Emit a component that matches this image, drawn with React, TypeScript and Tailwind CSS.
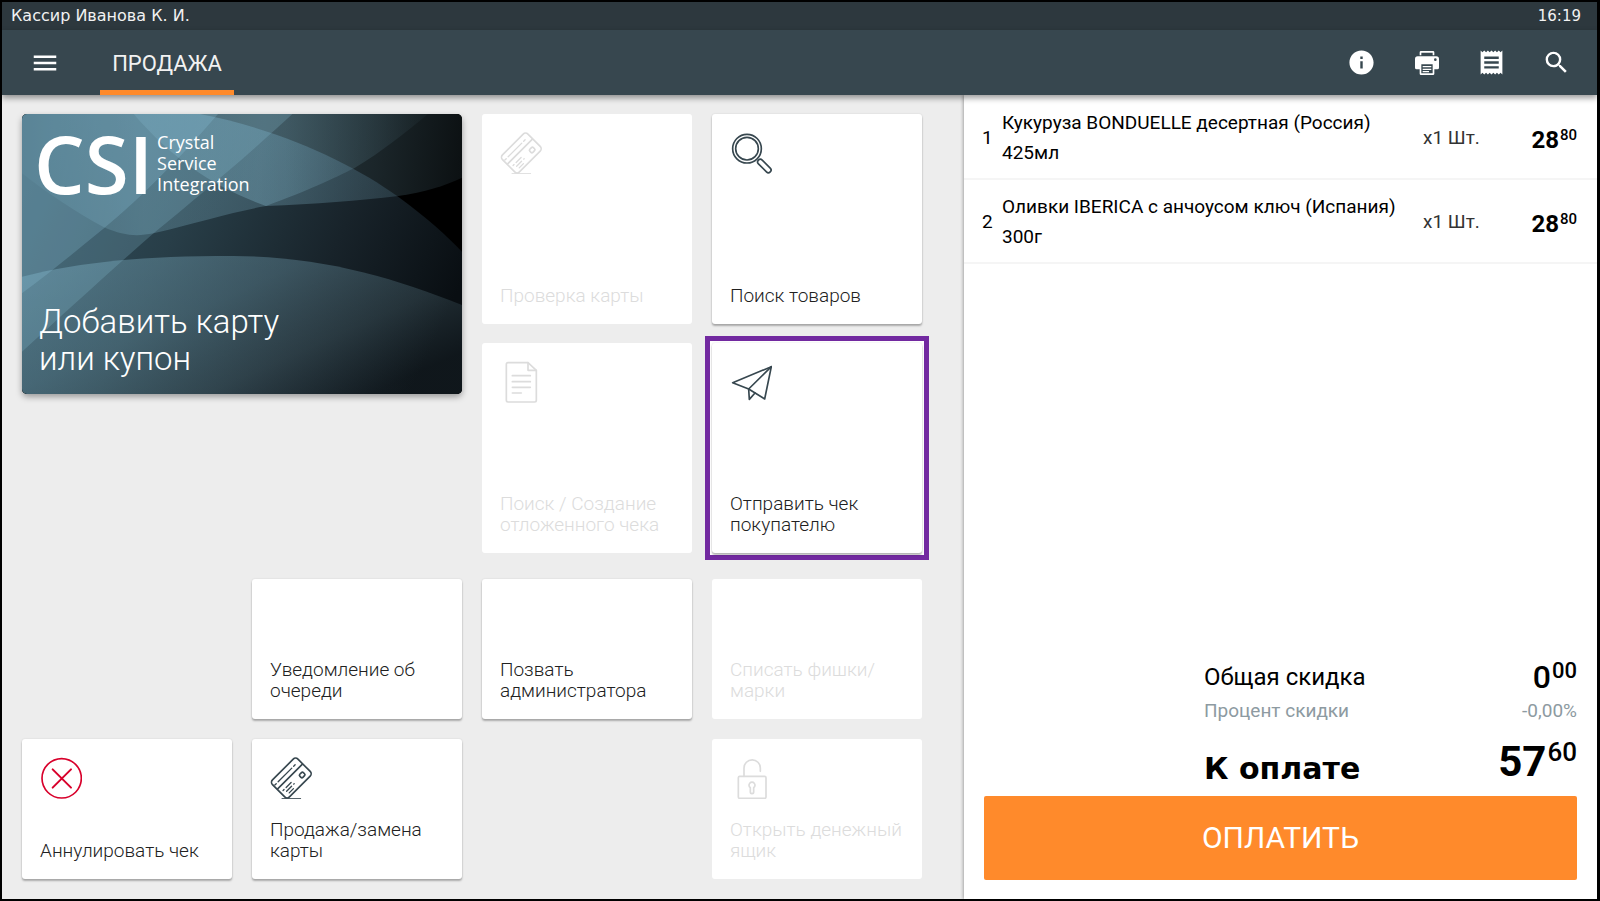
import React from "react";
import { MdInfo, MdMenu, MdReceipt, MdSearch } from "react-icons/md";

const svgProps = {
  viewBox: "0 0 126 126",
  className: "size-[42px] shrink-0",
  fill: "none",
  stroke: "currentColor",
  strokeWidth: 5,
  strokeLinecap: "round" as const,
  strokeLinejoin: "round" as const,
  "aria-hidden": true,
};

function CardIcon() {
  return (
    <svg {...svgProps}>
      <g transform="translate(64 63) rotate(-45)">
        <rect x="-54" y="-36" width="108" height="72" rx="10" />
        <path d="M-52 -6H52" />
        <path d="M-50 -20H-44M-36 -20H22M30 -20H36" strokeWidth="4" />
        <rect x="22" y="10" width="15" height="13" rx="4" />
        <path d="M-44 9H-40M-31 9H-10M-38 18H-17M-8 18H-6M-36 27H-18" strokeWidth="4" />
      </g>
      <path d="M36 125H92" strokeWidth="3" />
    </svg>
  );
}

function LoupeIcon() {
  return (
    <svg {...svgProps}>
      <circle cx="51" cy="50" r="43" />
      <circle cx="51" cy="50" r="34" />
      <rect x="-25" y="-8" width="50" height="16" rx="8" transform="translate(103 102) rotate(45)" />
    </svg>
  );
}

function DocumentIcon() {
  return (
    <svg {...svgProps}>
      <path d="M84 5H24a5 5 0 0 0-5 5V118a5 5 0 0 0 5 5H104a5 5 0 0 0 5-5V28Z" />
      <path d="M84 5V28H109M37 44H91M37 62H91M37 79H91M37 96H64" />
    </svg>
  );
}

function PlaneIcon() {
  return (
    <svg {...svgProps}>
      <path d="M8 65L124 17L104 114L56 84Z" />
      <path d="M124 17L56 84L58 115L75 96" />
    </svg>
  );
}

function CancelIcon() {
  return (
    <svg {...svgProps} className="size-[42px] shrink-0 text-[#d8002b]">
      <circle cx="65" cy="64" r="59" />
      <path d="M38 37L93 92M93 37L38 92" strokeWidth="6" />
    </svg>
  );
}

function LockIcon() {
  return (
    <svg {...svgProps}>
      <rect x="25" y="58" width="83" height="66" rx="4" />
      <path d="M42 58V33a24 24 0 0 1 49 0V43" />
      <path d="M61 92a9 9 0 1 1 10 0V105a5 5 0 0 1-10 0Z" />
    </svg>
  );
}

function PrinterIcon() {
  return (
    <svg viewBox="0 0 72 72" className="size-6" fill="currentColor" aria-hidden="true">
      <path d="M14 13V4a4 4 0 0 1 4-4H54a4 4 0 0 1 4 4V13H53V5H19V13Z" />
      <path
        fillRule="evenodd"
        d="M8 16H64a8 8 0 0 1 8 8V50a5 5 0 0 1-5 5H58V68a4 4 0 0 1-4 4H18a4 4 0 0 1-4-4V55H5a5 5 0 0 1-5-5V24a8 8 0 0 1 8-8ZM61 22a4 4 0 1 0 0 8a4 4 0 0 0 0-8ZM19 40V67H53V40Z"
      />
      <path d="M23 45H49V49H23ZM23 53H49V57H23ZM23 60H42V64H23Z" />
    </svg>
  );
}

type TileProps = {
  label: string;
  icon?: React.ReactNode;
  disabled?: boolean;
  place: string;
};

function Tile({ label, icon, disabled, place }: TileProps) {
  const tone = disabled
    ? "text-[#dcdcdc]"
    : "text-[#37474f] shadow-[0_2px_2px_rgba(0,0,0,0.28),0_0_2px_rgba(0,0,0,0.12)]";
  return (
    <button
      type="button"
      disabled={disabled}
      className={`flex flex-col justify-between rounded-[3px] bg-white p-[18px] text-left text-[19px]/[21px] font-light ${tone} ${place}`}
    >
      {icon ?? <span />}
      <span className={disabled ? "" : "text-[#212121]"}>{label}</span>
    </button>
  );
}

function CardArt() {
  return (
    <svg
      viewBox="62 42 1331 840"
      preserveAspectRatio="none"
      className="absolute inset-0 size-full rounded-[5px]"
      aria-hidden="true"
    >
      <defs>
        <linearGradient id="base" x1="0" y1="0.3" x2="1" y2="0.6">
          <stop offset="0" stopColor="#32505e" />
          <stop offset="0.35" stopColor="#283e48" />
          <stop offset="0.7" stopColor="#18232a" />
          <stop offset="1" stopColor="#090e12" />
        </linearGradient>
        <linearGradient id="wave" x1="0" y1="0" x2="1" y2="0.7">
          <stop offset="0" stopColor="#8cc4da" stopOpacity="0.36" />
          <stop offset="0.45" stopColor="#7aaabd" stopOpacity="0.33" />
          <stop offset="0.75" stopColor="#6d929f" stopOpacity="0.24" />
          <stop offset="1" stopColor="#5a7a88" stopOpacity="0.08" />
        </linearGradient>
        <linearGradient id="sheen" x1="0" y1="0" x2="1" y2="0">
          <stop offset="0" stopColor="#8cc4da" stopOpacity="0.06" />
          <stop offset="0.3" stopColor="#8cc4da" stopOpacity="0.26" />
          <stop offset="0.65" stopColor="#8cc4da" stopOpacity="0.24" />
          <stop offset="1" stopColor="#8cc4da" stopOpacity="0.03" />
        </linearGradient>
        <linearGradient id="crest" gradientUnits="userSpaceOnUse" x1="400" y1="0" x2="1393" y2="100">
          <stop offset="0" stopColor="#8cc4da" stopOpacity="0.2" />
          <stop offset="0.4" stopColor="#8cc4da" stopOpacity="0.3" />
          <stop offset="0.75" stopColor="#8cc4da" stopOpacity="0.19" />
          <stop offset="1" stopColor="#8cc4da" stopOpacity="0.09" />
        </linearGradient>
      </defs>
      <rect x="62" y="42" width="1331" height="840" fill="#000" />
      <path
        d="M62 42H600C850 90 1060 190 1200 290C1290 355 1350 410 1393 455V882H62Z"
        fill="url(#base)"
      />
      <path
        d="M62 530C250 484 430 468 700 468C960 468 1180 530 1393 615V882H62Z"
        fill="url(#wave)"
      />
      <path
        d="M62 220C140 280 230 340 310 382C370 408 410 410 460 400C600 366 700 336 800 318C930 270 1000 238 1068 204C1150 155 1220 100 1290 42H62Z"
        fill="url(#sheen)"
      />
      <path
        d="M400 42C520 180 640 260 800 318C950 312 1080 302 1200 288C1280 276 1340 258 1393 233V42Z"
        fill="url(#crest)"
      />
      <path d="M62 42H880C730 180 600 285 460 400C330 512 190 640 62 755Z" fill="#8cc4da" fillOpacity="0.23" />
      <path d="M62 42H655C540 175 430 285 310 385C230 450 150 515 62 580Z" fill="#8cc4da" fillOpacity="0.25" />
    </svg>
  );
}

function LoyaltyCard() {
  return (
    <button
      type="button"
      className="relative col-span-2 row-span-2 flex h-[280px] flex-col justify-between self-start rounded-[5px] bg-black pt-4 pb-[17px] text-left text-white shadow-[0_3px_6px_rgba(0,0,0,0.35)]"
    >
      <CardArt />
      <span className="relative flex items-center gap-1 pl-3 font-['Open_Sans',sans-serif]">
        <span className="text-[80px]/[66px] font-semibold">CSI</span>
        <span className="text-lg/[21px]">
          Crystal
          <br />
          Service
          <br />
          Integration
        </span>
      </span>
      <span className="relative pl-[17px] text-[33px]/[37px] font-light">
        Добавить карту
        <br />
        или купон
      </span>
    </button>
  );
}

const items = [
  { id: 1, name: "Кукуруза BONDUELLE десертная (Россия) 425мл", qty: "x1 Шт.", rub: "28", kop: "80" },
  { id: 2, name: "Оливки IBERICA с анчоусом ключ (Испания) 300г", qty: "x1 Шт.", rub: "28", kop: "80" },
];

const actions = [
  { label: "Информация", icon: <MdInfo className="size-[29px]" /> },
  { label: "Печать", icon: <PrinterIcon /> },
  { label: "Чеки", icon: <MdReceipt className="size-[29px]" /> },
  { label: "Поиск", icon: <MdSearch className="size-[29px]" /> },
];

export default function App() {
  return (
    <div className="flex min-h-screen flex-col border-2 border-r-[3px] border-black bg-[#ededed] font-[Roboto,sans-serif] text-black">
      <div className="flex h-7 items-center justify-between bg-[#2d383e] pr-4 pl-[9px] font-['DejaVu_Sans',sans-serif] text-[#f2f2f2]">
        <span className="text-base/5">Кассир Иванова К. И.</span>
        <time className="text-[15px]/5">16:19</time>
      </div>

      <header className="relative z-10 flex h-[65px] items-stretch justify-between bg-[#37474f] pr-2 text-white shadow-[0_3px_6px_rgba(0,0,0,0.4)]">
        <div className="flex">
          <button type="button" aria-label="Меню" className="flex w-[86px] items-center justify-center">
            <MdMenu className="size-[30px]" />
          </button>
          <nav className="ml-3 flex">
            <a
              href="#sale"
              className="flex w-[134px] items-center justify-center border-b-[5px] border-[#ff8a2b] pt-[7px] text-[22px]/[26px] text-[#f2f2f2]"
            >
              ПРОДАЖА
            </a>
          </nav>
        </div>
        <div className="flex">
          {actions.map((a) => (
            <button
              key={a.label}
              type="button"
              aria-label={a.label}
              className="flex w-[65px] items-center justify-center"
            >
              {a.icon}
            </button>
          ))}
        </div>
      </header>

      <div className="grid flex-1 grid-cols-[962fr_633fr]">
        <main className="flex flex-col justify-between gap-6 pt-[19px] pr-[42px] pb-5 pl-5">
          <div className="grid auto-rows-[210px] grid-cols-4 gap-x-5 gap-y-[19px]">
            <LoyaltyCard />
            <Tile label="Проверка карты" icon={<CardIcon />} disabled place="col-start-3" />
            <Tile label="Поиск товаров" icon={<LoupeIcon />} place="col-start-4" />
            <Tile
              label="Поиск / Создание отложенного чека"
              icon={<DocumentIcon />}
              disabled
              place="col-start-3"
            />
            <div className="relative col-start-4 grid">
              <div className="absolute -inset-[7px] border-[5px] border-[#7229a0] bg-white" />
              <Tile label="Отправить чек покупателю" icon={<PlaneIcon />} place="relative" />
            </div>
          </div>
          <div className="grid auto-rows-[140px] grid-cols-4 gap-5">
            <Tile label="Уведомление об очереди" place="col-start-2" />
            <Tile label="Позвать администратора" place="col-start-3" />
            <Tile label="Списать фишки/марки" disabled place="col-start-4" />
            <Tile label="Аннулировать чек" icon={<CancelIcon />} place="col-start-1" />
            <Tile label="Продажа/замена карты" icon={<CardIcon />} place="col-start-2" />
            <Tile label="Открыть денежный ящик" icon={<LockIcon />} disabled place="col-start-4" />
          </div>
        </main>

        <aside className="flex flex-col bg-white shadow-[-1px_0_3px_rgba(0,0,0,0.3)]">
          <table className="w-full text-[19px]/[30px]">
            <tbody>
              {items.map((it) => (
                <tr key={it.id} className="h-[84px] border-b-2 border-[#f5f5f5]">
                  <td className="w-[38px] pt-0.5 pl-[18px]">{it.id}</td>
                  <td className="pt-0.5 pr-3">{it.name}</td>
                  <td className="w-[90px] pt-0.5 text-[#333]">{it.qty}</td>
                  <td className="w-[84px] pt-0.5 pr-5">
                    <span className="flex items-start justify-end gap-px pt-1">
                      <span className="text-2xl/[30px] font-bold">{it.rub}</span>
                      <span className="text-[15px]/5 font-medium">{it.kop}</span>
                    </span>
                  </td>
                </tr>
              ))}
            </tbody>
          </table>

          <div className="mt-auto px-5 pb-[19px]">
            <dl className="ml-[220px] grid grid-cols-[1fr_auto] items-start pb-1.5">
              <dt className="text-2xl/[36px]">Общая скидка</dt>
              <dd className="flex items-start justify-end gap-px font-medium">
                <span className="text-[32px]/[36px]">0</span>
                <span className="text-[22px]/6">00</span>
              </dd>
              <dt className="text-[19px]/[32px] text-[#8d9aa1]">Процент скидки</dt>
              <dd className="text-right text-[19px]/[32px] text-[#8d9aa1]">-0,00%</dd>
              <dt className="pt-6 font-['DejaVu_Sans',sans-serif] text-[30px]/9 font-bold">К оплате</dt>
              <dd className="flex items-start justify-end gap-px pt-[7px] font-bold">
                <span className="text-[42px]/[56px]">57</span>
                <span className="text-[26px]/9 font-medium">60</span>
              </dd>
            </dl>
            <button
              type="button"
              className="h-21 w-full rounded-[2px] bg-[#ff8a2b] text-[30px]/[36px] text-white"
            >
              ОПЛАТИТЬ
            </button>
          </div>
        </aside>
      </div>
    </div>
  );
}
